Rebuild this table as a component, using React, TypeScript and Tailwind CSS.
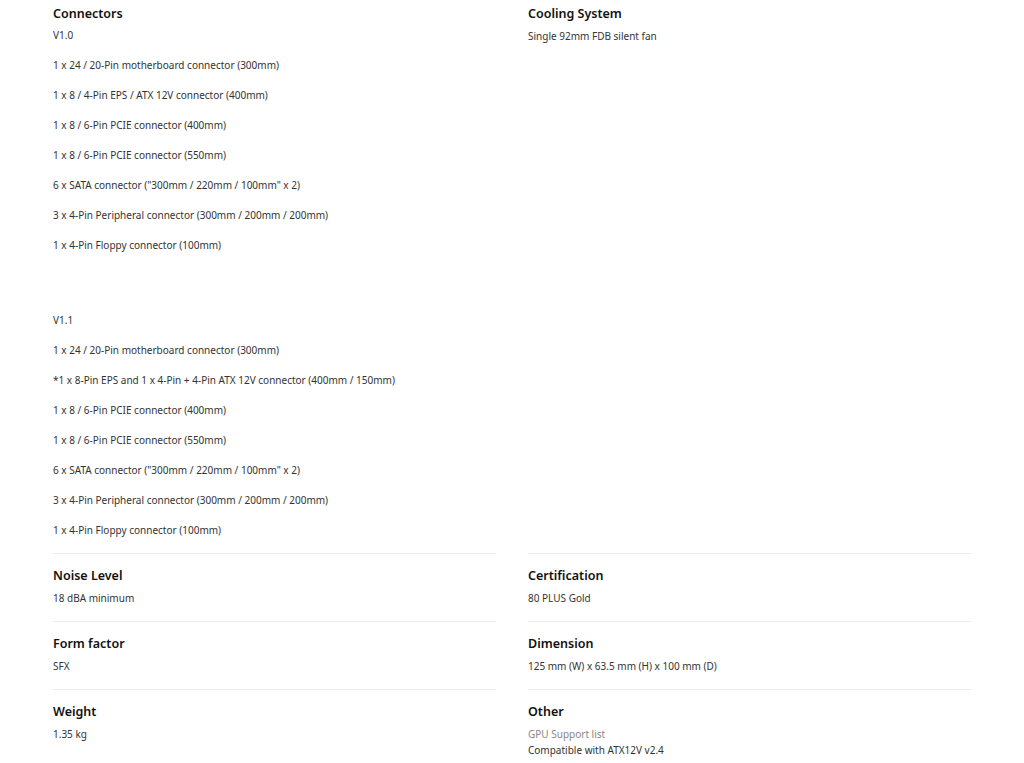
const font = { fontFamily: '"Noto Sans", "Open Sans", sans-serif' };

const v10 = [
    '1 x 24 / 20-Pin motherboard connector (300mm)',
    '1 x 8 / 4-Pin EPS / ATX 12V connector (400mm)',
    '1 x 8 / 6-Pin PCIE connector (400mm)',
    '1 x 8 / 6-Pin PCIE connector (550mm)',
    '6 x SATA connector ("300mm / 220mm / 100mm" x 2)',
    '3 x 4-Pin Peripheral connector (300mm / 200mm / 200mm)',
    '1 x 4-Pin Floppy connector (100mm)',
];

const v11 = [
    '1 x 24 / 20-Pin motherboard connector (300mm)',
    '*1 x 8-Pin EPS and 1 x 4-Pin + 4-Pin ATX 12V connector (400mm / 150mm)',
    '1 x 8 / 6-Pin PCIE connector (400mm)',
    '1 x 8 / 6-Pin PCIE connector (550mm)',
    '6 x SATA connector ("300mm / 220mm / 100mm" x 2)',
    '3 x 4-Pin Peripheral connector (300mm / 200mm / 200mm)',
    '1 x 4-Pin Floppy connector (100mm)',
];

function Title({ children }: { children: string }) {
    return <h3 className="text-[12.5px] leading-[20px] font-semibold text-[#111]">{children}</h3>;
}

function Cell({ title, lines, first }: { title: string; lines: string[]; first?: boolean }) {
    return (
        <div className={first ? 'pt-1 pb-[15px]' : 'border-t border-[#ebebeb] pt-[12px] pb-[15px]'}>
            <Title>{title}</Title>
            <div className="mt-1 text-[10px] leading-[16px] text-[#333]">
                {lines.map((l) => (
                    <p key={l}>{l}</p>
                ))}
            </div>
        </div>
    );
}

export default function App() {
    return (
        <div className="bg-white min-h-[763px] px-[53px]" style={font}>
            <div className="grid grid-cols-2 gap-x-[32px] w-[918px]">
                <div className="pt-1 pb-[15px]">
                    <Title>Connectors</Title>
                    <div className="mt-[3px] text-[10px] leading-[16px] text-[#333] flex flex-col gap-[14px]">
                        <p>V1.0</p>
                        {v10.map((l) => (
                            <p key={'a' + l}>{l}</p>
                        ))}
                        <p className="mt-[45px]">V1.1</p>
                        {v11.map((l) => (
                            <p key={'b' + l}>{l}</p>
                        ))}
                    </div>
                </div>
                <Cell first title="Cooling System" lines={['Single 92mm FDB silent fan']} />

                <Cell title="Noise Level" lines={['18 dBA minimum']} />
                <Cell title="Certification" lines={['80 PLUS Gold']} />

                <Cell title="Form factor" lines={['SFX']} />
                <Cell title="Dimension" lines={['125 mm (W) x 63.5 mm (H) x 100 mm (D)']} />

                <Cell title="Weight" lines={['1.35 kg']} />
                <div className="border-t border-[#ebebeb] pt-[12px] pb-[15px]">
                    <Title>Other</Title>
                    <div className="mt-1 text-[10px] leading-[16px]">
                        <p className="text-[#888]">GPU Support list</p>
                        <p className="text-[#333]">Compatible with ATX12V v2.4</p>
                    </div>
                </div>
            </div>
        </div>
    );
}
